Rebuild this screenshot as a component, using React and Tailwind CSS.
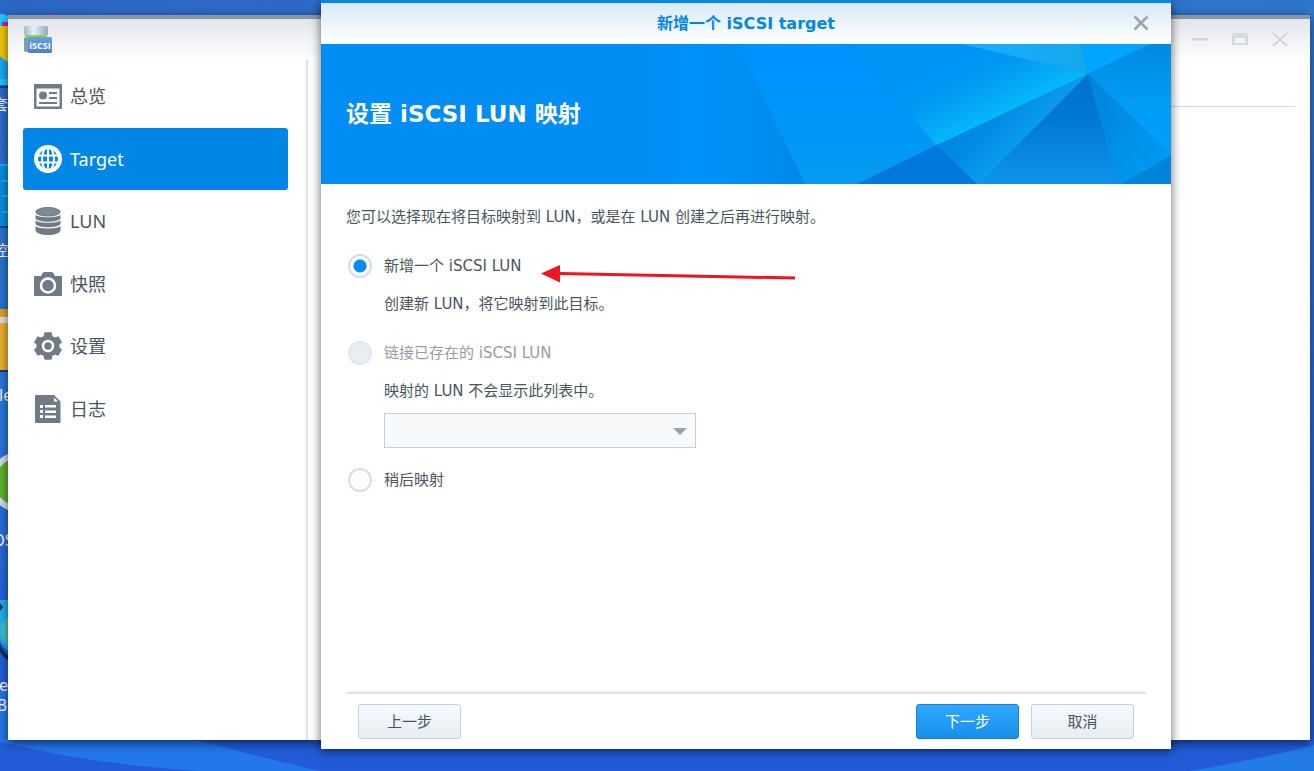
import { useState } from "react";

const menu = [
  { id: "overview", label: "总览", icon: OverviewIcon },
  { id: "target", label: "Target", icon: GlobeIcon },
  { id: "lun", label: "LUN", icon: DiskIcon },
  { id: "snapshot", label: "快照", icon: CameraIcon },
  { id: "settings", label: "设置", icon: GearIcon },
  { id: "log", label: "日志", icon: LogIcon },
];

function OverviewIcon() {
  return (
    <svg viewBox="0 0 28 28" className="size-7" fill="#717b86">
      <path fillRule="evenodd" d="M1 2h26a1 1 0 0 1 1 1v23a1 1 0 0 1-1 1H1a1 1 0 0 1-1-1V3a1 1 0 0 1 1-1zm1.500 4.500v18h23v-18z" />
      <circle cx="9" cy="13.500" r="4" />
      <path d="M15 10h8v2h-8zM15 15h8v2h-8zM5 20h18v2H5z" />
    </svg>
  );
}

function GlobeIcon() {
  return (
    <svg viewBox="0 0 28 28" className="size-7" fill="none" stroke="#fff" strokeWidth="2">
      <circle cx="14" cy="14" r="12" strokeWidth="4" />
      <ellipse cx="14" cy="14" rx="6" ry="12" />
      <path d="M14 2v24M3 10.500h22M3 17.500h22" />
    </svg>
  );
}

function DiskIcon() {
  return (
    <svg viewBox="0 0 28 28" className="size-7" fill="#717b86">
      <ellipse cx="14" cy="4.800" rx="12.500" ry="4.800" />
      <path d="M1.500 7.500c2 3.700 23 3.700 25 0v3.700c-1 4.600-24 4.600-25 0z" />
      <path d="M1.500 13c2 3.700 23 3.700 25 0v3.700c-1 4.600-24 4.600-25 0z" />
      <path d="M1.500 18.700c2 3.700 23 3.700 25 0v4.500c-1 6.400-24 6.400-25 0z" />
      <ellipse cx="14" cy="4.800" rx="11" ry="3.600" fill="#808993" />
    </svg>
  );
}

function CameraIcon() {
  return (
    <svg viewBox="0 0 28 28" className="size-7" fill="#717b86">
      <path d="M1 6h6l2-3.500Q9.300 2 10 2h8q.7 0 1 .5L21 6h6a1 1 0 0 1 1 1v18a1 1 0 0 1-1 1H1a1 1 0 0 1-1-1V7a1 1 0 0 1 1-1z" />
      <circle cx="14" cy="15.500" r="7" stroke="#fff" strokeWidth="2.600" />
    </svg>
  );
}

function GearIcon() {
  return (
    <svg viewBox="0 0 28 28" className="size-7">
      <path
        fill="#717b86"
        stroke="#717b86"
        strokeWidth="1.500"
        strokeLinejoin="round"
        d="M11 1h6l.8 3.600 2.800 1.600 3.500-1.100 3 5.200L24.800 12v4l2.300 1.700-3 5.200-3.500-1.100-2.800 1.600L17 27h-6l-.8-3.600-2.800-1.600-3.500 1.100-3-5.200L3.200 16v-4L.9 10.300l3-5.200 3.500 1.100 2.800-1.600z"
      />
      <circle cx="14" cy="14" r="5" fill="#717b86" stroke="#fff" strokeWidth="2.600" />
    </svg>
  );
}

function LogIcon() {
  return (
    <svg viewBox="0 0 28 28" className="size-7">
      <path fill="#717b86" d="M2 0h18l6.500 6.500V27a1 1 0 0 1-1 1H2a1 1 0 0 1-1-1V1a1 1 0 0 1 1-1z" />
      <path fill="#fff" d="M20 2.500 24 6.500h-4zM6 10h3v3H6zM11 10h11v2.500H11zM6 15h3v3H6zM11 15.500h11V18H11zM6 20h3v3H6zM11 20.500h11V23H11z" />
    </svg>
  );
}

function AppLogo() {
  return (
    <svg viewBox="0 0 30 30" className="size-[30px]">
      <defs>
        <linearGradient id="disk" x1="0" x2="1">
          <stop offset="0" stopColor="#9db8cc" />
          <stop offset=".4" stopColor="#e6f0f8" />
          <stop offset="1" stopColor="#8fa9bd" />
        </linearGradient>
        <linearGradient id="tag" x2="0" y2="1">
          <stop offset="0" stopColor="#6aa0dd" />
          <stop offset="1" stopColor="#4a80ca" />
        </linearGradient>
      </defs>
      <rect x="1" y="1" width="24" height="10" rx="2" fill="url(#disk)" />
      <rect x="2" y="10" width="22" height="5" fill="#8ed04b" />
      <path d="M1 13h24v12H1z" fill="#6aa3a8" />
      <path d="M1 15h7v12H3q-2 0-2-2z" fill="#7f9fb8" />
      <rect x="5" y="12" width="24" height="16" rx="1.500" fill="url(#tag)" />
      <text x="17" y="24" textAnchor="middle" fontSize="9" fontWeight="700" fill="#fff" fontFamily="Open Sans, sans-serif">
        iSCSI
      </text>
    </svg>
  );
}

function Wallpaper() {
  return (
    <svg viewBox="0 0 1314 771" preserveAspectRatio="none" className="absolute inset-0 size-full">
      <defs>
        <linearGradient id="sky" x2="0" y2="1">
          <stop offset="0" stopColor="#2c66c6" />
          <stop offset=".55" stopColor="#2a79de" />
          <stop offset=".8" stopColor="#2561dc" />
          <stop offset="1" stopColor="#225bd8" />
        </linearGradient>
        <linearGradient id="skyRight" x1="0" x2="1" y1="0" y2=".5">
          <stop offset="0" stopColor="#2f7acb" stopOpacity="0" />
          <stop offset="1" stopColor="#2f7acb" />
        </linearGradient>
        <linearGradient id="edge" x2="0" y2="1">
          <stop offset="0" stopColor="#2f7ccd" />
          <stop offset="1" stopColor="#225bd8" />
        </linearGradient>
      </defs>
      <path fill="url(#sky)" d="M0 0h1314v771H0z" />
      <path fill="url(#skyRight)" d="M0 0h1314v300H0z" />
      <path fill="url(#edge)" d="M1300 40h14v731h-14z" />
      <path fill="#2277ec" d="M0 690v52q90 22 200 29h120q-60-14-140-35z" />
      <path fill="#227be6" d="M1190 771q70-12 124-26v26z" />
    </svg>
  );
}

// shortcuts that peek out from behind the left edge of the window
function Shortcuts() {
  return (
    <div className="absolute inset-y-0 left-0 w-14 overflow-hidden text-[15px] leading-5 text-white">
      <svg viewBox="0 0 60 771" className="absolute top-0 left-0 h-[771px] w-[60px]">
        <path fill="#22c8f5" d="M0 14q6 0 9 3v68H0z" />
        <path fill="#c21fe0" d="M2 22h7v5H2zM48 14h6v2h-6z" />
        <path fill="#f2c90c" d="M0 26h9v36Q3 60 0 56z" />
        <path fill="#1ba8f6" d="M0 56q3 4 9 6v17H0z" />
        <path fill="#0a90e0" d="M0 164h9v63H0z" />
        <path fill="#13b8f8" d="M0 164h9v2H0zM2 180h7v2H2zM2 195h7v2H2zM2 211h7v2H2z" />
        <path fill="#0c3f86" d="M0 86h9v2H0zM0 226h9v2H0zM0 370h9v2H0z" />
        <path fill="#e5a322" d="M0 309h9v8H0z" />
        <path fill="#dfe3e8" d="M0 317h9v6H0z" />
        <path fill="#efb02e" d="M0 323h9v47H0z" />
        <circle cx="19" cy="482" r="30" fill="#d5dfee" />
        <circle cx="19" cy="482" r="24" fill="#5fb32e" />
        <path fill="#20b2f5" d="M0 600h9v52Q2 646 0 640z" />
        <circle cx="20" cy="631" r="19" fill="#4cc5be" />
        <path fill="#12305f" d="M0 603l3 4-3 4zM0 644q3 8 9 12v5q-7-4-9-10z" />
      </svg>
      <span className="absolute top-[95px] -left-[7px]">套</span>
      <span className="absolute top-[241px] -left-[7px]">控</span>
      <span className="absolute top-[386px] -left-px">le</span>
      <span className="absolute top-[531px] -left-[7px]">OS</span>
      <span className="absolute top-[676px] -left-px">e</span>
      <span className="absolute top-[696px] -left-[3px]">Bu</span>
    </div>
  );
}

function Facets() {
  return (
    <svg viewBox="640 44 531 140" className="absolute top-0 right-0 h-[140px] w-[531px]">
      <defs>
        <linearGradient id="f1" x1="0" x2="1">
          <stop offset="0" stopColor="#028df4" />
          <stop offset=".3" stopColor="#0091fa" />
          <stop offset=".6" stopColor="#008ff4" />
          <stop offset="1" stopColor="#0088e8" />
        </linearGradient>
        <linearGradient id="f2" x2="0" y2="1">
          <stop offset="0" stopColor="#0092ff" />
          <stop offset=".6" stopColor="#0096f8" />
          <stop offset="1" stopColor="#069cf0" />
        </linearGradient>
        <linearGradient id="f3" gradientUnits="userSpaceOnUse" x1="982" y1="47" x2="1012" y2="110">
          <stop offset="0" stopColor="#0094f8" />
          <stop offset=".4" stopColor="#0299f2" />
          <stop offset="1" stopColor="#06b8fa" />
        </linearGradient>
        <linearGradient id="f4" x1="0" x2="1">
          <stop offset="0" stopColor="#1cacff" />
          <stop offset="1" stopColor="#14a8ec" />
        </linearGradient>
        <linearGradient id="f5" gradientUnits="userSpaceOnUse" x1="985" y1="120" x2="1015" y2="150">
          <stop offset="0" stopColor="#0088e2" />
          <stop offset="1" stopColor="#0a9cee" />
        </linearGradient>
        <linearGradient id="f6" x2="0" y2="1">
          <stop offset="0" stopColor="#0072cc" />
          <stop offset=".4" stopColor="#0078d2" />
          <stop offset="1" stopColor="#0f93ea" />
        </linearGradient>
        <linearGradient id="f7" x2="1" y2="1">
          <stop offset="0" stopColor="#0082d8" />
          <stop offset="1" stopColor="#009df6" />
        </linearGradient>
        <linearGradient id="f8" x2="0" y2="1">
          <stop offset="0" stopColor="#008ae2" />
          <stop offset=".6" stopColor="#009ef8" />
        </linearGradient>
      </defs>
      <path fill="url(#f1)" d="M640 44h98l67 140H640z" />
      <path fill="url(#f2)" d="M738 44h109l90 101-80 39h-52z" />
      <path fill="url(#f3)" d="M847 44h115l126 30-151 71z" />
      <path fill="url(#f4)" d="M962 44h119l7 30z" />
      <path fill="#00a5ff" d="M1081 44h69l-62 30z" />
      <path fill="url(#f8)" d="M1150 44h21v111l-83-81z" />
      <path fill="#0078dc" d="m937 145 40 39H857z" />
      <path fill="url(#f5)" d="m937 145 151-71-109 110h-2z" />
      <path fill="url(#f6)" d="m1088 74 30 110H979z" />
      <path fill="url(#f7)" d="m1088 74 83 81-49 29h-4z" />
      <path fill="#0083da" d="M1171 155v29h-49z" />
    </svg>
  );
}

const radioClass =
  "size-6 shrink-0 appearance-none rounded-full border-2 border-[#d5dde7] bg-white checked:bg-[radial-gradient(circle,#068cf3_6px,#fff_7px)] disabled:border-[#dfe6ed] disabled:bg-[#e9eef3]";

const greyButton =
  "h-[35px] w-[103px] rounded-[3px] border border-[#c4d0de] bg-linear-to-b from-[#f5fafe] to-[#e8edf2] text-[#4b5560]";

function Dialog() {
  const [mode, setMode] = useState("new");

  return (
    <div
      role="dialog"
      aria-labelledby="dialog-title"
      className="absolute top-0 right-[143px] bottom-[22px] left-[321px] flex flex-col border-t-3 border-[#0086e8] bg-white text-[15px] leading-6 text-[#4b5560] shadow-[0_2px_10px_rgba(0,0,0,0.6)]"
    >
      <header className="relative flex h-[41px] shrink-0 items-center justify-center bg-linear-to-b from-[#d8eaf8] to-white">
        <h1 id="dialog-title" className="text-base font-bold text-[#0086e5]">新增一个 iSCSI target</h1>
        <button aria-label="关闭" className="absolute top-3 right-[22px]">
          <svg viewBox="0 0 16 16" className="size-4" stroke="#9ba3ab" strokeWidth="2.500">
            <path d="M1.500 1.500l13 13M14.500 1.500l-13 13" />
          </svg>
        </button>
      </header>

      <div className="relative flex h-[140px] shrink-0 items-center overflow-hidden bg-[#028df4] px-[25px]">
        <Facets />
        <h2 className="relative text-[23px] leading-8 font-bold text-white">设置 iSCSI LUN 映射</h2>
      </div>

      <form className="flex flex-1 flex-col px-[25px] pt-[21px]" onSubmit={(e) => e.preventDefault()}>
        <p>您可以选择现在将目标映射到 LUN，或是在 LUN 创建之后再进行映射。</p>

        <div className="mt-[25px] flex flex-col gap-[25px] pl-0.5">
          <div className="flex flex-col gap-[14px]">
            <label className="flex items-center gap-3">
              <input type="radio" name="mode" className={radioClass} checked={mode === "new"} onChange={() => setMode("new")} />
              新增一个 iSCSI LUN
            </label>
            <p className="pl-9">创建新 LUN，将它映射到此目标。</p>
          </div>

          <div className="flex flex-col gap-[14px]">
            <label className="flex items-center gap-3 text-[#959da6]">
              <input type="radio" name="mode" className={radioClass} disabled />
              链接已存在的 iSCSI LUN
            </label>
            <label htmlFor="lun" className="pl-9">映射的 LUN 不会显示此列表中。</label>
          </div>
        </div>

        <div className="relative mt-[10px] ml-[38px] w-[312px]">
          <select id="lun" disabled className="block h-[35px] w-full appearance-none border border-[#c4d0de] bg-[#f6f8fa] px-3 opacity-100">
            <option></option>
          </select>
          <svg viewBox="0 0 14 7" className="pointer-events-none absolute top-[15px] right-[9px] h-[7px] w-[14px]" fill="#97a2ad">
            <path d="M0 0h14L7 7z" />
          </svg>
        </div>

        <label className="mt-5 flex items-center gap-3 pl-0.5">
          <input type="radio" name="mode" className={radioClass} checked={mode === "later"} onChange={() => setMode("later")} />
          稍后映射
        </label>

        <footer className="mt-auto flex items-center gap-3 border-t-2 border-[#e2e3e4] px-3 py-[10px] shadow-[0_-3px_3px_-3px_rgba(0,0,0,0.15)]">
          <button type="button" className={greyButton}>上一步</button>
          <button type="submit" className="ml-auto h-[35px] w-[103px] rounded-[3px] border border-[#1583d5] bg-linear-to-b from-[#2fa7ff] to-[#1890ea] text-white">
            下一步
          </button>
          <button type="button" className={greyButton}>取消</button>
        </footer>
      </form>

      {/* red pointer to the selected option */}
      <svg viewBox="0 0 256 20" className="pointer-events-none absolute top-[261px] left-[220px] h-5 w-64">
        <path fill="#ed1520" d="M0 9.500 19 1v7l235 4.500v3L19 11v7.500z" />
      </svg>
    </div>
  );
}

export default function App() {
  const [active, setActive] = useState("target");

  return (
    <div className="relative flex min-h-screen flex-col overflow-hidden pt-[15px] pr-1 pb-[31px] pl-2 font-['DejaVu_Sans','Noto_Sans_CJK_SC',sans-serif]">
      <Wallpaper />
      <Shortcuts />

      <div className="relative flex flex-1 flex-col border-t-4 border-[#8b95a2] bg-white shadow-[0_3px_10px_rgba(0,0,0,0.6)]">
        <header className="flex h-[41px] items-center justify-between bg-linear-to-b from-[#e2e6eb] to-white pr-[22px] pl-[15px]">
          <AppLogo />
          <div className="flex gap-6">
            <button aria-label="最小化">
              <svg viewBox="0 0 16 16" className="size-4" fill="#cfd4d9">
                <path d="M0 6h16v2.500H0z" />
              </svg>
            </button>
            <button aria-label="最大化">
              <svg viewBox="0 0 16 16" className="size-4" fill="#d5d9dd">
                <path fillRule="evenodd" d="M0 1h16v12H0zm3 5v5h10V6z" />
              </svg>
            </button>
            <button aria-label="关闭窗口">
              <svg viewBox="0 0 16 16" className="size-4" stroke="#d3d7dc" strokeWidth="2.200">
                <path d="M1 1l14 13M15 1L1 14" />
              </svg>
            </button>
          </div>
        </header>

        <div className="flex flex-1">
          <nav className="w-[300px] border-r border-[#dcdcdc] pt-[5px] pr-[19px] pl-[15px] shadow-[inset_-3px_0_3px_-2px_rgba(0,0,0,0.12)]">
            <ul className="flex h-[375px] flex-col font-['Noto_Sans','Noto_Sans_CJK_SC',sans-serif] text-lg text-[#4b5560]">
              {menu.map(({ id, label, icon: Icon }) => (
                <li key={id} className="flex flex-1">
                  <button
                    onClick={() => setActive(id)}
                    className={
                      id === active
                        ? "flex flex-1 items-center gap-2 rounded-[3px] bg-[#0086e5] pl-[11px] text-white"
                        : "flex flex-1 items-center gap-2 pl-[11px]"
                    }
                  >
                    <Icon />
                    {label}
                  </button>
                </li>
              ))}
            </ul>
          </nav>
          <main className="flex-1 pr-[15px] pl-3">
            <div className="h-[47px] border-b border-[#cddcea]" />
          </main>
        </div>
      </div>

      <Dialog />
    </div>
  );
}
